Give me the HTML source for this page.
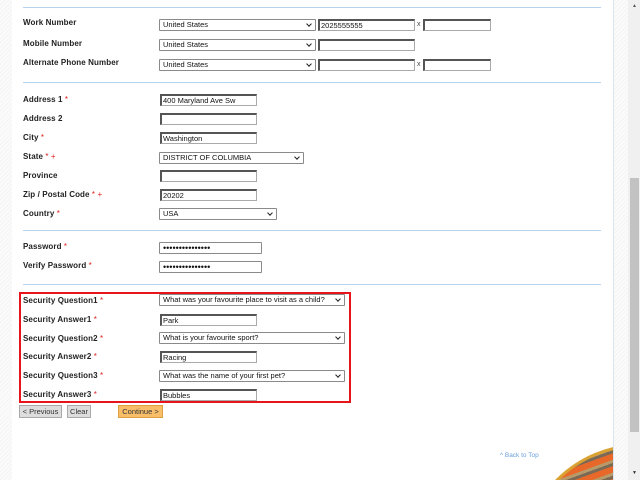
<!DOCTYPE html>
<html style="overflow:hidden"><head><style>
*{margin:0;padding:0;box-sizing:border-box}
body{width:640px;height:480px;overflow:hidden;position:relative;background:#fff;font-family:"Liberation Sans","DejaVu Sans",sans-serif}
.hatch{position:absolute;top:0;height:480px;background:repeating-linear-gradient(135deg,#f4f4f4 0 1px,#fbfbfb 1px 3px)}
.l{position:absolute;left:23px;font-size:8px;font-weight:bold;color:#222;white-space:nowrap;top:0;letter-spacing:0.1px}
.l i{font-style:normal;color:#e02020;font-weight:normal}
.hr{position:absolute;left:23px;width:578px;height:1px;background:#b6d3ee}
.sel{position:absolute;height:12px;border:1px solid #8a8a8a;border-radius:1px;background:#fff;font-size:7.5px;line-height:10px;padding-left:3px;color:#111;white-space:nowrap;overflow:hidden}
.sel:after{content:"";position:absolute;right:4px;top:2px;width:3px;height:3px;border-right:1.3px solid #222;border-bottom:1.3px solid #222;transform:rotate(45deg)}
.sel.pw:after{display:none}
.sel.pw{font-size:9px;line-height:10px;letter-spacing:0}
.in{position:absolute;height:12px;border:1px solid #aaa;border-top:2px solid #555;border-left:2px solid #555;background:#fff;font-size:7.5px;line-height:9px;padding-left:1px;color:#111;white-space:nowrap;overflow:hidden}
.x{position:absolute;font-size:7px;color:#444}
.btn{position:absolute;top:405px;height:13px;font-size:7.5px;line-height:11px;text-align:center;border:1px solid #aaa;background:#ddd;color:#333}
</style></head><body>
<div class="hatch" style="left:0;width:12px"></div>
<div class="hatch" style="left:613px;width:16px;border-left:1px solid #dde6f0"></div>
<div style="position:absolute;left:628px;top:0;width:12px;height:480px;background:#f0f0f0"></div>
<div style="position:absolute;left:630px;top:178px;width:9px;height:254px;background:#c2c2c2"></div>
<div style="position:absolute;left:632px;top:3px;font-size:5px;color:#555">▲</div>
<div style="position:absolute;left:632px;top:470px;font-size:5px;color:#333">▼</div>

<div class="hr" style="top:7px"></div>
<div class="l" style="top:18px">Work Number</div>
<div class="sel" style="left:159px;top:19px;width:157px">United States</div>
<div class="in" style="left:318px;top:19px;width:97px">2025555555</div>
<div class="x" style="left:417px;top:21px">x</div>
<div class="in" style="left:423px;top:19px;width:68px"></div>
<div class="l" style="top:39px">Mobile Number</div>
<div class="sel" style="left:159px;top:39px;width:157px">United States</div>
<div class="in" style="left:318px;top:39px;width:97px"></div>
<div class="l" style="top:58px">Alternate Phone Number</div>
<div class="sel" style="left:159px;top:59px;width:157px">United States</div>
<div class="in" style="left:318px;top:59px;width:97px"></div>
<div class="x" style="left:417px;top:61px">x</div>
<div class="in" style="left:423px;top:59px;width:68px"></div>
<div class="hr" style="top:82px"></div>

<div class="l" style="top:95px">Address 1 <i>*</i></div>
<div class="in" style="left:160px;top:94px;width:97px">400 Maryland Ave Sw</div>
<div class="l" style="top:114px">Address 2</div>
<div class="in" style="left:160px;top:113px;width:97px"></div>
<div class="l" style="top:133px">City <i>*</i></div>
<div class="in" style="left:160px;top:132px;width:97px">Washington</div>
<div class="l" style="top:152px">State <i>* +</i></div>
<div class="sel" style="left:159px;top:152px;width:145px">DISTRICT OF COLUMBIA</div>
<div class="l" style="top:171px">Province</div>
<div class="in" style="left:160px;top:170px;width:97px"></div>
<div class="l" style="top:190px">Zip / Postal Code <i>* +</i></div>
<div class="in" style="left:160px;top:189px;width:97px">20202</div>
<div class="l" style="top:209px">Country <i>*</i></div>
<div class="sel" style="left:159px;top:208px;width:118px">USA</div>
<div class="hr" style="top:230px"></div>

<div class="l" style="top:242px">Password <i>*</i></div>
<div class="sel pw" style="left:159px;top:242px;width:103px">•••••••••••••••</div>
<div class="l" style="top:261px">Verify Password <i>*</i></div>
<div class="sel pw" style="left:159px;top:261px;width:103px">•••••••••••••••</div>
<div class="hr" style="top:284px"></div>

<div style="position:absolute;left:19px;top:292px;width:332px;height:111px;border:2px solid #e8141c"></div>
<div class="l" style="top:296px">Security Question1 <i>*</i></div>
<div class="sel" style="left:159px;top:294px;width:186px">What was your favourite place to visit as a child?</div>
<div class="l" style="top:315px">Security Answer1 <i>*</i></div>
<div class="in" style="left:160px;top:314px;width:97px">Park</div>
<div class="l" style="top:334px">Security Question2 <i>*</i></div>
<div class="sel" style="left:159px;top:332px;width:186px">What is your favourite sport?</div>
<div class="l" style="top:352px">Security Answer2 <i>*</i></div>
<div class="in" style="left:160px;top:351px;width:97px">Racing</div>
<div class="l" style="top:371px">Security Question3 <i>*</i></div>
<div class="sel" style="left:159px;top:370px;width:186px">What was the name of your first pet?</div>
<div class="l" style="top:390px">Security Answer3 <i>*</i></div>
<div class="in" style="left:160px;top:389px;width:97px">Bubbles</div>

<div class="btn" style="left:19px;width:43px">&lt; Previous</div>
<div class="btn" style="left:67px;width:24px">Clear</div>
<div class="btn" style="left:118px;width:45px;background:#f8bf68;border-color:#e0a040">Continue &gt;</div>

<div style="position:absolute;left:500px;top:452px;font-size:6.5px;color:#6aa0d8">^ Back to Top</div>
<div style="position:absolute;left:540px;top:440px;width:73px;height:40px;overflow:hidden">
<div style="position:absolute;left:-18px;top:4px;width:236px;height:236px;border-radius:50%;background:#d9a232;padding:3px">
<div style="width:100%;height:100%;border-radius:50%;background:repeating-linear-gradient(160deg,#e8682a 0 6px,#b89a6a 6px 9px,#7a6a55 9px 12px)"></div></div></div>
</body></html>
